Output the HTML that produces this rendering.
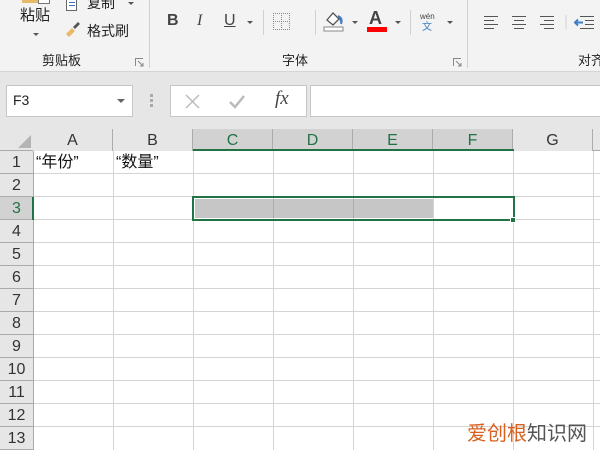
<!DOCTYPE html>
<html><head><meta charset="utf-8"><style>
*{margin:0;padding:0;box-sizing:border-box}
body{width:600px;height:450px;overflow:hidden;position:relative;background:#fff;font-family:"Liberation Sans","Noto Sans CJK SC",sans-serif;color:#222}
.a{position:absolute;white-space:nowrap}
.cjk{font-family:"Noto Sans CJK SC","Liberation Sans",sans-serif}
.lc{font-family:"Liberation Sans","Noto Sans CJK SC",sans-serif}
.vl{position:absolute;width:1px;background:#d4d4d4}
.hl{position:absolute;height:1px;background:#d4d4d4}
.ch{position:absolute;top:129px;height:22px;width:80px;text-align:center;font-size:16px;line-height:24px;color:#333;border-right:1px solid #ababab;background:#e6e6e6}
.rh{position:absolute;left:0;width:33px;height:23px;text-align:center;font-size:16px;line-height:24px;color:#333;background:#e6e6e6;border-bottom:1px solid #ababab}
</style></head><body>
<div class="a" style="left:0;top:0;width:600px;height:72px;background:#f3f3f3;border-bottom:1px solid #d5d5d5"></div>
<div class="a" style="left:0;top:72px;width:600px;height:57px;background:#e6e6e6"></div>
<div class="a" style="left:22px;top:0;width:16px;height:3px;background:#e8b96a"></div>
<div class="a" style="left:38px;top:0;width:12px;height:4px;border:1px solid #777;border-top:none;background:#fff"></div>
<div class="a cjk" style="left:20px;top:4px;font-size:15px;line-height:22px">粘贴</div>
<div class="a" style="left:33px;top:33px;width:0;height:0;border-left:3px solid transparent;border-right:3px solid transparent;border-top:3px solid #555"></div>
<div class="a" style="left:66px;top:0;width:11px;height:11px;border:1px solid #666;border-top:none;background:#fff"></div>
<div class="a" style="left:69px;top:2px;width:6px;height:1px;background:#3f6fb4;box-shadow:0 3px 0 #3f6fb4"></div>
<div class="a cjk" style="left:87px;top:-7px;font-size:14px;line-height:20px">复制</div>
<div class="a" style="left:128px;top:2px;width:0;height:0;border-left:3px solid transparent;border-right:3px solid transparent;border-top:3px solid #555"></div>
<svg class="a" style="left:64px;top:22px" width="18" height="16"><path d="M2 12 L8 6 L11 9 L5 15 Z" fill="#e8b96a"/><path d="M9 5 L14 0 L16 2 L11 7 Z" fill="#555"/></svg>
<div class="a cjk" style="left:87px;top:21px;font-size:14px;line-height:20px">格式刷</div>
<div class="a cjk" style="left:42px;top:51px;font-size:13px;line-height:18px">剪贴板</div>
<svg class="a" style="left:135px;top:58px" width="9" height="9"><path d="M0.5 8 V0.5 H8" fill="none" stroke="#888"/><path d="M3 3 L8 8 M5 8 H8 V5" fill="none" stroke="#888"/></svg>
<div class="a" style="left:149px;top:0;width:1px;height:68px;background:#d0d0d0"></div>
<div class="a" style="left:167px;top:12px;font-size:16px;font-weight:bold;color:#444">B</div>
<div class="a" style="left:197px;top:12px;font-size:16px;font-style:italic;font-family:'Liberation Serif',serif;color:#444">I</div>
<div class="a" style="left:224px;top:12px;font-size:16px;text-decoration:underline;color:#444">U</div>
<div class="a" style="left:247px;top:21px;border-left:3px solid transparent;border-right:3px solid transparent;border-top:3px solid #555"></div>
<div class="a" style="left:263px;top:10px;width:1px;height:25px;background:#d0d0d0"></div>
<div class="a" style="left:273px;top:13px;width:17px;height:17px;border:1px dotted #888"></div>
<div class="a" style="left:281px;top:13px;width:1px;height:17px;border-left:1px dotted #888"></div>
<div class="a" style="left:273px;top:21px;width:17px;height:1px;border-top:1px dotted #888"></div>
<div class="a" style="left:315px;top:10px;width:1px;height:25px;background:#d0d0d0"></div>
<svg class="a" style="left:323px;top:10px" width="22" height="23"><path d="M4 10 L10 3 L16 9 L10 15 Z" fill="#fff" stroke="#555" stroke-width="1.3"/><path d="M15 6 Q20 8 18 14" fill="#3f7fc4" stroke="#3f7fc4" stroke-width="2"/><rect x="1" y="17" width="19" height="4" fill="#fff" stroke="#888"/></svg>
<div class="a" style="left:352px;top:21px;border-left:3px solid transparent;border-right:3px solid transparent;border-top:3px solid #555"></div>
<div class="a" style="left:369px;top:8px;font-size:18px;font-weight:bold;color:#444">A</div>
<div class="a" style="left:367px;top:27px;width:20px;height:5px;background:#f00"></div>
<div class="a" style="left:395px;top:21px;border-left:3px solid transparent;border-right:3px solid transparent;border-top:3px solid #555"></div>
<div class="a" style="left:410px;top:10px;width:1px;height:25px;background:#d0d0d0"></div>
<div class="a" style="left:420px;top:12px;font-size:8px;color:#444">wén</div>
<div class="a cjk" style="left:422px;top:20px;font-size:10px;color:#3f7fc4;line-height:12px">文</div>
<div class="a" style="left:447px;top:21px;border-left:3px solid transparent;border-right:3px solid transparent;border-top:3px solid #555"></div>
<div class="a cjk" style="left:282px;top:51px;font-size:13px;line-height:18px">字体</div>
<svg class="a" style="left:453px;top:58px" width="9" height="9"><path d="M0.5 8 V0.5 H8" fill="none" stroke="#888"/><path d="M3 3 L8 8 M5 8 H8 V5" fill="none" stroke="#888"/></svg>
<div class="a" style="left:467px;top:0;width:1px;height:68px;background:#d0d0d0"></div>
<svg class="a" style="left:484px;top:15px" width="120" height="14" stroke="#555" stroke-width="1"><path d="M0 1.5H14M0 5.5H10M0 9.5H14M0 13.5H10"/><path d="M28 1.5H42M30 5.5H40M28 9.5H42M30 13.5H40"/><path d="M56 1.5H70M60 5.5H70M56 9.5H70M60 13.5H70"/><path d="M82 -5V20" stroke="#d0d0d0"/><path d="M96 1.5H110M101 5.5H110M101 9.5H110M96 13.5H110"/><path d="M91 7.5H99M94 4.5L91 7.5L94 10.5" stroke="#3f7fc4" stroke-width="2" fill="none"/></svg>
<div class="a cjk" style="left:578px;top:51px;font-size:13px;line-height:18px">对齐</div>
<div class="a" style="left:6px;top:85px;width:127px;height:32px;background:#fff;border:1px solid #c6c6c6"></div>
<div class="a" style="left:13px;top:92px;font-size:14px;color:#222">F3</div>
<div class="a" style="left:117px;top:99px;border-left:4px solid transparent;border-right:4px solid transparent;border-top:4px solid #666"></div>
<div class="a" style="left:150px;top:94px;width:3px;height:3px;background:#aaa;box-shadow:0 5px 0 #aaa,0 10px 0 #aaa"></div>
<div class="a" style="left:170px;top:85px;width:137px;height:32px;background:#fff;border:1px solid #c6c6c6"></div>
<svg class="a" style="left:184px;top:93px" width="120" height="18"><path d="M2 2L15 15M15 2L2 15" stroke="#bbb" stroke-width="1.5"/><path d="M46 9L51 14L60 3" stroke="#bbb" stroke-width="2.5" fill="none"/></svg>
<div class="a" style="left:275px;top:88px;font-size:19px;font-style:italic;font-family:'Liberation Serif',serif;color:#444">fx</div>
<div class="a" style="left:310px;top:85px;width:295px;height:32px;background:#fff;border:1px solid #c6c6c6"></div>
<div class="a" style="left:0;top:129px;width:600px;height:22px;background:#e6e6e6;border-bottom:1px solid #ababab"></div>
<svg class="a" style="left:18px;top:135px" width="13" height="13"><path d="M13 0V13H0Z" fill="#b4b4b4"/></svg>
<div class="a" style="left:33px;top:129px;width:1px;height:22px;background:#ababab"></div>
<div class="ch" style="left:33px">A</div>
<div class="ch" style="left:113px">B</div>
<div class="ch" style="left:193px;background:#d2d2d2;color:#217346">C</div>
<div class="ch" style="left:273px;background:#d2d2d2;color:#217346">D</div>
<div class="ch" style="left:353px;background:#d2d2d2;color:#217346">E</div>
<div class="ch" style="left:433px;background:#d2d2d2;color:#217346">F</div>
<div class="ch" style="left:513px">G</div>
<div class="a" style="left:193px;top:149px;width:321px;height:2px;background:#217346"></div>
<div class="a" style="left:0;top:151px;width:34px;height:299px;background:#e6e6e6;border-right:1px solid #ababab"></div>
<div class="rh" style="top:151px">1</div>
<div class="rh" style="top:174px">2</div>
<div class="rh" style="top:197px;background:#d2d2d2;color:#217346">3</div>
<div class="rh" style="top:220px">4</div>
<div class="rh" style="top:243px">5</div>
<div class="rh" style="top:266px">6</div>
<div class="rh" style="top:289px">7</div>
<div class="rh" style="top:312px">8</div>
<div class="rh" style="top:335px">9</div>
<div class="rh" style="top:358px">10</div>
<div class="rh" style="top:381px">11</div>
<div class="rh" style="top:404px">12</div>
<div class="rh" style="top:427px">13</div>
<div class="a" style="left:32px;top:197px;width:2px;height:23px;background:#217346"></div>
<div class="vl" style="left:113px;top:151px;height:299px"></div>
<div class="vl" style="left:193px;top:151px;height:299px"></div>
<div class="vl" style="left:273px;top:151px;height:299px"></div>
<div class="vl" style="left:353px;top:151px;height:299px"></div>
<div class="vl" style="left:433px;top:151px;height:299px"></div>
<div class="vl" style="left:513px;top:151px;height:299px"></div>
<div class="vl" style="left:593px;top:151px;height:299px"></div>
<div class="hl" style="left:34px;top:173px;width:566px"></div>
<div class="hl" style="left:34px;top:196px;width:566px"></div>
<div class="hl" style="left:34px;top:219px;width:566px"></div>
<div class="hl" style="left:34px;top:242px;width:566px"></div>
<div class="hl" style="left:34px;top:265px;width:566px"></div>
<div class="hl" style="left:34px;top:288px;width:566px"></div>
<div class="hl" style="left:34px;top:311px;width:566px"></div>
<div class="hl" style="left:34px;top:334px;width:566px"></div>
<div class="hl" style="left:34px;top:357px;width:566px"></div>
<div class="hl" style="left:34px;top:380px;width:566px"></div>
<div class="hl" style="left:34px;top:403px;width:566px"></div>
<div class="hl" style="left:34px;top:426px;width:566px"></div>
<div class="a lc" style="left:36px;top:152px;font-size:16px;line-height:22px;color:#111">“年份”</div>
<div class="a lc" style="left:116px;top:152px;font-size:16px;line-height:22px;color:#111">“数量”</div>
<div class="a" style="left:195px;top:199px;width:238px;height:19px;background:#c6c6c6"></div>
<div class="a" style="left:273px;top:199px;width:1px;height:19px;background:#ababab"></div>
<div class="a" style="left:353px;top:199px;width:1px;height:19px;background:#ababab"></div>
<div class="a" style="left:192px;top:196px;width:323px;height:25px;border:2px solid #217346"></div>
<div class="a" style="left:510px;top:217px;width:6px;height:6px;background:#217346;border:1px solid #fff"></div>
<div class="a cjk" style="left:467px;top:420px;font-size:20px;line-height:24px;color:#555"><span style="color:#d9601e">爱创根</span>知识网</div>
</body></html>
